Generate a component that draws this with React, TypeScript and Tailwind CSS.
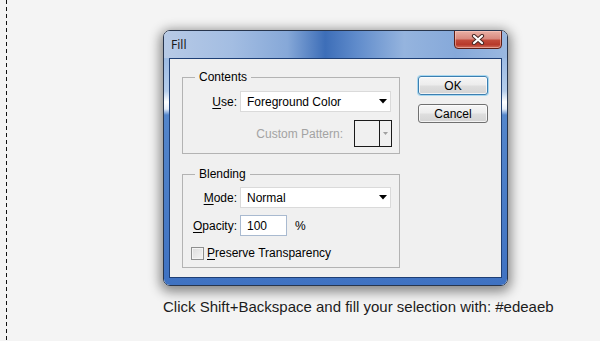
import React from 'react';

// Small black dropdown arrow used by the combo boxes
const Arrow = ({ color = '#000' }: { color?: string }) => (
  <svg width="8" height="5" viewBox="0 0 8 5">
    <path d="M0 0h8L4 4.5z" fill={color} />
  </svg>
);

const Select = ({ value }: { value: string }) => (
  <div className="w-[151px] h-[21px] bg-white border border-[#dadada] flex items-center justify-between pl-[6px] pr-[3px]">
    <span className="text-[12px] text-black">{value}</span>
    <Arrow />
  </div>
);

const Label = ({ first, rest, w = 'w-[54px]' }: { first: string; rest: string; w?: string }) => (
  <span className={`${w} text-right text-[12px] text-black`}>
    <u className="underline-offset-2">{first}</u>
    {rest}
  </span>
);

const Button = ({ text, primary }: { text: string; primary?: boolean }) => (
  <div
    className={`w-[70px] h-[19px] rounded-[3px] border flex items-center justify-center text-[12px] text-black bg-[linear-gradient(180deg,#f6f6f6_0%,#ececec_48%,#dedede_52%,#d4d4d4_100%)] ${
      primary
        ? 'border-[#3c7fb1] shadow-[0_0_0_1px_rgba(120,200,240,0.6),inset_0_0_0_1px_rgba(255,255,255,0.7)]'
        : 'border-[#707070] shadow-[inset_0_0_0_1px_rgba(255,255,255,0.7)]'
    }`}
  >
    {text}
  </div>
);

export default function App() {
  return (
    <div className="w-[600px] h-[341px] bg-[#f4f4f4] flex overflow-hidden font-['Liberation_Sans',Arial,sans-serif]">
      {/* dashed guide on the left */}
      <div className="ml-[6px] w-px h-full bg-[repeating-linear-gradient(180deg,#111_0px,#111_4px,transparent_4px,transparent_7px)]" />

      <div className="ml-[156px] pt-[30px] flex flex-col">
        {/* Fill dialog window */}
        <div className="w-[345px] h-[256px] rounded-[7px] border border-[#27354d] overflow-hidden flex flex-col shadow-[inset_0_0_0_1px_rgba(255,255,255,0.45),0_3px_12px_3px_rgba(0,0,0,0.45)]">
          <div className="h-[27px] flex justify-between bg-[linear-gradient(90deg,#b7cae6_0%,#a3bde2_20%,#86a8d8_36%,#3d6eb8_47%,#5f8bcb_56%,#95b4de_70%,#86a9da_85%,#9ab8e0_100%)]">
            <span className="self-center pl-[7px] text-[12px] text-[#1a1a1a] font-['Noto_Sans',sans-serif]">Fill</span>
            <div className="-mt-px mr-[5px] w-[48px] h-[19px] rounded-b-[4px] border border-[#5d1e17] flex items-center justify-center bg-[linear-gradient(180deg,#eab0a5_0%,#d98a7f_45%,#c24a3a_55%,#b7392a_80%,#d0705f_100%)] shadow-[inset_0_0_0_1px_rgba(255,210,200,0.5)]">
              <svg width="14" height="11" viewBox="0 0 14 11">
                <path d="M3 2l8 7M11 2l-8 7" stroke="#4a2a26" strokeWidth="4.2" strokeLinecap="round" />
                <path d="M3 2l8 7M11 2l-8 7" stroke="#fff" strokeWidth="2.2" strokeLinecap="round" />
              </svg>
            </div>
          </div>

          <div className="flex-1 px-[5px] pb-[7px] bg-[linear-gradient(180deg,#9dbbe3_0px,#b5cdeb_33px,#ffffff_44px,#e6eef9_51px,#5486cb_57px,#3f72c2_100%)]">
            <div className="w-full h-full border border-[#1e3f75] bg-[#f0f0f0] flex pl-[12px] pt-[11px]">
              {/* left column: group boxes */}
              <div className="w-[218px] flex flex-col">
                <fieldset className="border border-[#b3b3b3] pr-[7px] pb-[6px]">
                  <legend className="ml-[12px] px-[4px] text-[12px] leading-[14px] text-black">Contents</legend>
                  <div className="mt-[7px] flex items-center">
                    <Label first="U" rest="se:" />
                    <div className="ml-[3px]">
                      <Select value="Foreground Color" />
                    </div>
                  </div>
                  <div className="mt-[8px] flex items-center justify-end">
                    <span className="text-[12px] text-[#a3a3a3]">Custom Pattern:</span>
                    <div className="ml-[11px] w-[38px] h-[27px] border border-[#1a1a1a] flex">
                      <div className="w-[25px] h-full border-r border-[#1a1a1a]" />
                      <div className="flex-1 flex items-center justify-center">
                        <svg width="5" height="3" viewBox="0 0 5 3">
                          <path d="M0 0h5L2.5 3z" fill="#a0a0a0" />
                        </svg>
                      </div>
                    </div>
                  </div>
                </fieldset>

                <fieldset className="mt-[13px] border border-[#b3b3b3] pr-[7px] pb-[5px]">
                  <legend className="ml-[12px] px-[4px] text-[12px] leading-[14px] text-black">Blending</legend>
                  <div className="mt-[6px] flex items-center">
                    <Label first="M" rest="ode:" />
                    <div className="ml-[3px]">
                      <Select value="Normal" />
                    </div>
                  </div>
                  <div className="mt-[7px] flex items-center">
                    <Label first="O" rest="pacity:" />
                    <div className="ml-[3px] w-[47px] h-[21px] bg-white border border-[#a9bad0] flex items-center pl-[6px] text-[12px] text-black">
                      100
                    </div>
                    <span className="ml-[8px] text-[12px] text-black">%</span>
                  </div>
                  <div className="mt-[8px] flex items-center pl-[8px]">
                    <div className="w-[13px] h-[13px] border border-[#8e8f8f] bg-[linear-gradient(135deg,#dcdcdc_0%,#f4f4f4_100%)] shadow-[inset_0_0_0_1px_#f4f4f4]" />
                    <span className="ml-[3px] text-[12px] text-black">
                      <u className="underline-offset-2">P</u>reserve Transparency
                    </span>
                  </div>
                </fieldset>
              </div>

              {/* right column: buttons */}
              <div className="ml-[18px] pt-[6px] flex flex-col gap-[9px]">
                <Button text="OK" primary />
                <Button text="Cancel" />
              </div>
            </div>
          </div>
        </div>

        <p className="mt-[12px] text-[15px] leading-[17px] text-[#1c1c1c]">
          Click Shift+Backspace and fill your selection with: #edeaeb
        </p>
      </div>
    </div>
  );
}
